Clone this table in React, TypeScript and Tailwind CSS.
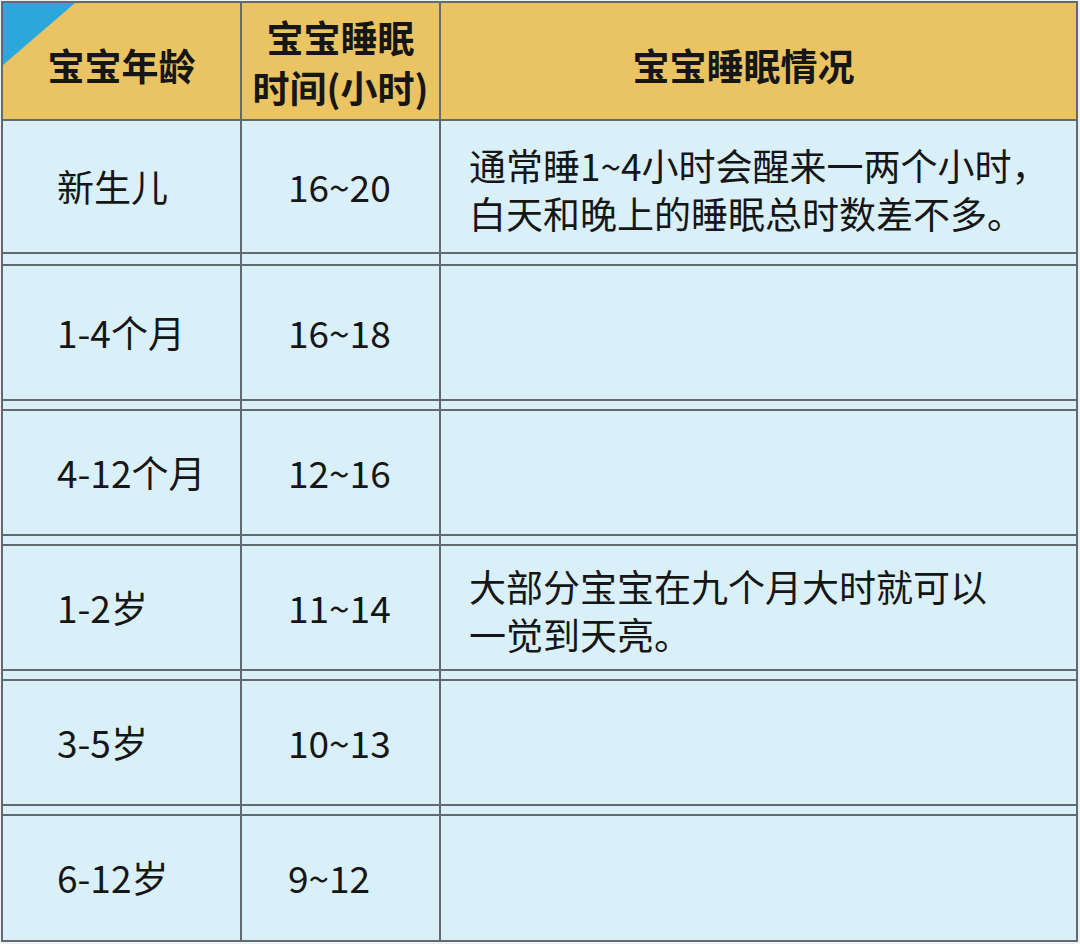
const rows = [
  { age: "新生儿", hours: "16~20", note: ["通常睡1~4小时会醒来一两个小时，", "白天和晚上的睡眠总时数差不多。"], h: "h-[133px]" },
  { age: "1-4个月", hours: "16~18", note: [], h: "h-[135px]" },
  { age: "4-12个月", hours: "12~16", note: [], h: "h-[125px]" },
  { age: "1-2岁", hours: "11~14", note: ["大部分宝宝在九个月大时就可以", "一觉到天亮。"], h: "h-[125px]" },
  { age: "3-5岁", hours: "10~13", note: [], h: "h-[125px]" },
  { age: "6-12岁", hours: "9~12", note: [], h: "h-[124px]" },
];

const cols = "grid grid-cols-[239px_199px_1fr]";
const line = "border-[#606a70]";

function Strip({ tall }: { tall?: boolean }) {
  return (
    <div className={`${cols} ${tall ? "h-[12px]" : "h-[10px]"} border-b-2 ${line}`}>
      <div className={`border-r-2 ${line}`} />
      <div className={`border-r-2 ${line}`} />
      <div />
    </div>
  );
}

export default function App() {
  return (
    <div
      className="h-[944px] w-[1080px] bg-[#eef0f1] pl-[1px] pt-[1px] text-[#161616]"
      style={{ fontFamily: '"Noto Sans CJK SC", "Noto Sans", sans-serif' }}
    >
      <div className={`relative w-[1077px] border-2 ${line} bg-[#daf0f9]`}>
        {/* 角标 */}
        <svg className="absolute left-0 top-0" width="72" height="62" viewBox="0 0 72 62">
          <polygon points="0,0 72,0 0,62" fill="#2ba7dc" />
        </svg>

        {/* 表头 */}
        <div className={`${cols} h-[118px] border-b-2 ${line} bg-[#eac463] text-[37px] font-bold`}>
          <div className={`flex items-center justify-center border-r-2 ${line} pt-[10px]`}>
            宝宝年龄
          </div>
          <div className={`flex items-center justify-center border-r-2 ${line} pt-[2px] text-center leading-[50px]`}>
            <p>
              宝宝睡眠
              <br />
              时间(小时)
            </p>
          </div>
          <div className="flex items-center justify-center pr-[30px] pt-[10px]">
            宝宝睡眠情况
          </div>
        </div>

        {rows.map((r, i) => (
          <div key={r.age}>
            <div className={`${cols} ${r.h} ${i < rows.length - 1 ? `border-b-2 ${line}` : ""} text-[37px]`}>
              <div className={`flex items-center border-r-2 ${line} pl-[54px]`}>{r.age}</div>
              <div className={`flex items-center border-r-2 ${line} pl-[46px]`}>{r.hours}</div>
              <div className="flex items-center whitespace-nowrap pl-[28px] pt-[4px] leading-[48px]">
                {r.note.length > 0 && (
                  <p>
                    {r.note[0]}
                    <br />
                    {r.note[1]}
                  </p>
                )}
              </div>
            </div>
            {i < rows.length - 1 && <Strip tall={i === 0} />}
          </div>
        ))}
      </div>
    </div>
  );
}
